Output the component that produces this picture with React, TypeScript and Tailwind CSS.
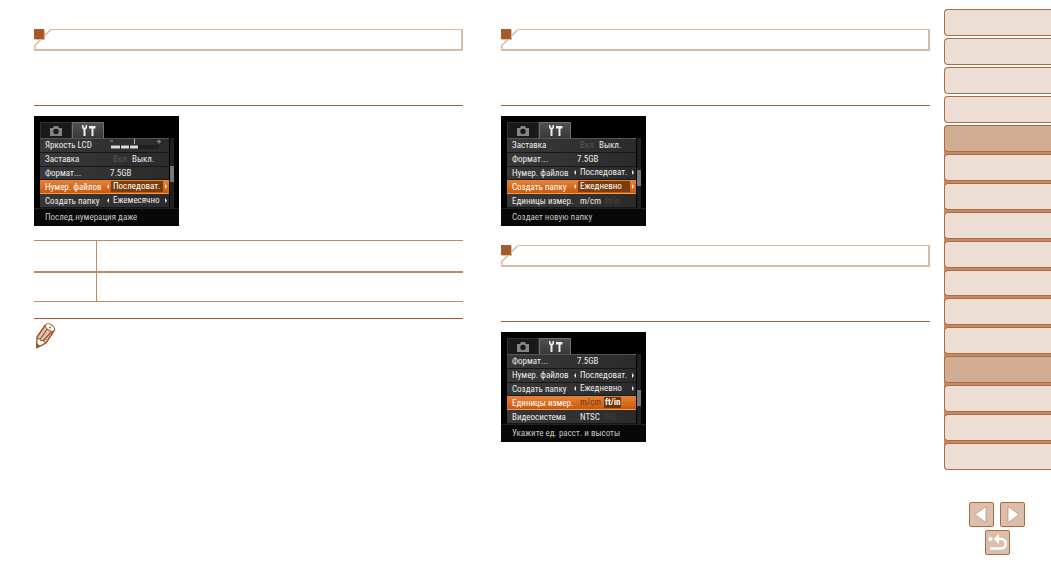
import React from "react";

type Row = { label: string; selected?: boolean; value: React.ReactNode };

function Heading() {
  return (
    <div className="flex h-[22px]">
      <svg width="17" height="22" viewBox="0 0 17 22" className="shrink-0" aria-hidden="true">
        <path d="M17 .5 .8 16.5V22" fill="none" stroke="#d9bba6" strokeWidth="1.6" />
        <path d="M0 21H17" stroke="#d9bba6" strokeWidth="2" />
        <rect x="1" y="1" width="10" height="10" fill="#d9bba6" />
        <rect width="10" height="10" fill="#a65a2a" />
      </svg>
      <div className="flex-1 border-t border-r-2 border-b-2 border-[#d9bba6]" />
    </div>
  );
}

function Arrow({ left, label }: { left?: boolean; label: string }) {
  return (
    <button type="button" aria-label={label} className="w-[2px] shrink-0">
      <svg width="2" height="5" viewBox="0 0 2 5">
        <path d={left ? "M2 0V5L0 2.5Z" : "M0 0V5L2 2.5Z"} fill="#f0f0f0" />
      </svg>
    </button>
  );
}

function Picker({ text, selected }: { text: string; selected?: boolean }) {
  return (
    <span className="-ml-[3px] flex items-center">
      <Arrow left label="Назад" />
      <span className="w-[2px]" />
      <span className={`w-[52px] pl-[2px] leading-[11px] ${selected ? "bg-[#7c3c08] text-white" : ""}`}>{text}</span>
      <span className="w-[2px]" />
      <Arrow label="Вперед" />
    </span>
  );
}

function Choice({ off, on }: { off: string; on: string }) {
  return (
    <span className="flex pl-[3px]">
      <span className="w-[19px] text-[#565656]">{off}</span>
      <span>{on}</span>
    </span>
  );
}

function Brightness() {
  return (
    <svg width="54" height="12" viewBox="0 0 54 12" role="img" aria-label="3 / 5">
      <path d="M0 2H3M47 2.5H51M49 .5V4.500" stroke="#999" />
      <path d="M24.500 0V5" stroke="#bbb" />
      <rect x="1" y="6" width="48" height="4" fill="#202020" />
      <path d="M1 8H10M11 8H19M20 8H28" stroke="#ddd" strokeWidth="3" />
    </svg>
  );
}

function Screen({ rows, hint, thumb }: { rows: Row[]; hint: string; thumb: string }) {
  return (
    <section className="flex h-[110px] w-[145px] flex-col overflow-hidden bg-black pt-[6px] pl-[6px] font-['Liberation_Sans_Narrow','Roboto_Condensed',Roboto,sans-serif] text-[9px] leading-3 text-[#ececec]">
      <div className="flex h-4">
        <button type="button" aria-label="Съемка" className="flex w-8 items-center justify-center rounded-t-[1px] border border-b-0 border-[#303030] bg-[#1a1a1a]">
          <svg width="12" height="10" viewBox="0 0 12 10">
            <path d="M0 2H3L4 0H8L9 2H12V10H0Z" fill="#858585" />
            <circle cx="6" cy="5.500" r="2.700" fill="#1a1a1a" />
          </svg>
        </button>
        <button type="button" aria-label="Настройка" className="flex w-8 items-center justify-center rounded-t-[1px] border border-b-0 border-[#707070] bg-linear-to-b from-[#505050] to-[#383838]">
          <svg width="15" height="11" viewBox="0 0 15 11">
            <path d="M1 0V3L2.500 4.500V11H4.500V4.500L6 3V0H4.500V2.500H2.500V0ZM8 1H14.500V3.500H12.500V11H10.500V3.500H8Z" fill="#eee" />
          </svg>
        </button>
      </div>
      <div className="flex h-[70px]">
        <ul className="grid w-[129px] grid-rows-5 border-t border-[#555]">
          {rows.map((r) => (
            <li
              key={r.label}
              className={`flex items-center border-b pl-[5px] whitespace-nowrap ${
                r.selected
                  ? "border-[#f29a50] bg-linear-to-b from-[#e88237] to-[#c85a0c] text-white"
                  : "border-[#171717] bg-linear-to-r from-[#383838] to-[#2b2b2b]"
              }`}
            >
              <span className="w-[65px] shrink-0">{r.label}</span>
              {r.value}
            </li>
          ))}
        </ul>
        <div className={`ml-px w-1 bg-[#202020] ${thumb}`}>
          <div className="h-4 bg-[#777]" />
        </div>
      </div>
      <p className="-ml-[6px] flex flex-1 items-center border-t border-[#222] bg-[#080808] pb-[2px] pl-[11px] whitespace-nowrap text-[#c4c4c4]">{hint}</p>
    </section>
  );
}

const folderRows: Row[] = [
  { label: "Заставка", value: <Choice off="Вкл." on="Выкл." /> },
  { label: "Формат...", value: "7.5GB" },
  { label: "Нумер. файлов", value: <Picker text="Последоват." /> },
  { label: "Создать папку", selected: true, value: <Picker text="Ежедневно" selected /> },
  {
    label: "Единицы измер.",
    value: (
      <span className="flex gap-1 pl-[3px]">
        m/cm<span className="text-[#484848]">ft/in</span>
      </span>
    ),
  },
];

const numberingRows: Row[] = [
  { label: "Яркость LCD", value: <Brightness /> },
  { label: "Заставка", value: <Choice off="Вкл." on="Выкл." /> },
  { label: "Формат...", value: "7.5GB" },
  { label: "Нумер. файлов", selected: true, value: <Picker text="Последоват." selected /> },
  { label: "Создать папку", value: <Picker text="Ежемесячно" /> },
];

const unitRows: Row[] = [
  { label: "Формат...", value: "7.5GB" },
  { label: "Нумер. файлов", value: <Picker text="Последоват." /> },
  { label: "Создать папку", value: <Picker text="Ежедневно" /> },
  {
    label: "Единицы измер.",
    selected: true,
    value: (
      <span className="flex gap-[3px] pl-[3px] leading-[11px] text-[#72350a]">
        m/cm<span className="bg-[#6c3408] px-px font-bold text-white">ft/in</span>
      </span>
    ),
  },
  {
    label: "Видеосистема",
    value: (
      <span className="flex gap-1 pl-[3px]">
        NTSC<span className="text-[#404040]">PAL</span>
      </span>
    ),
  },
];

function Tab({ n, active }: { n: number; active?: boolean }) {
  return (
    <a
      href={`#section-${n}`}
      aria-label={`Раздел ${n}`}
      className={`rounded-l-[4px] border border-r-0 border-[#b06c40] ${active ? "bg-[#d1ad93]" : "bg-[#ecddd5]"}`}
    />
  );
}

const navButton = "flex size-[25px] items-center justify-center rounded-[2px] border border-[#ac6a42] bg-[#dbbeac]";

export default function App() {
  return (
    <div className="flex min-h-screen bg-white">
      <main className="flex flex-1 gap-[38px] pt-[29px] pr-[14px] pl-[34px]">
        <article className="flex-1">
          <Heading />
          <hr className="mt-[54px] mb-[10px] border-[#a06032]" />
          <Screen rows={numberingRows} hint="Послед.нумерация даже" thumb="pt-7" />
          <table className="mt-[14px] w-full border-collapse border-y border-[#c08a66]">
            <tbody>
              <tr className="h-[31px] border-b-2 border-[#c08a66]">
                <td className="w-[62px] border-r border-[#c08a66]" />
                <td />
              </tr>
              <tr className="h-[30px]">
                <td className="border-r border-[#c08a66]" />
                <td />
              </tr>
            </tbody>
          </table>
          <hr className="mt-4 border-[#a65a2a]" />
          <svg width="22" height="26" viewBox="0 0 22 26" className="mt-[4px]" aria-hidden="true">
            <path d="M11 2.500 3 14V24.500L12 20 20.500 7Z" fill="#dec3b2" stroke="#a0501f" strokeWidth="1.400" />
            <path d="M3 15.500Q6 15 6.500 17.500 10 17 11.500 20L3 24.500Z" fill="#fff" stroke="#a0501f" />
            <path d="M14 5 6 16.500M18 8 9 18" stroke="#a0501f" strokeWidth="1.200" />
            <ellipse cx="16" cy="4.500" rx="5" ry="3" transform="rotate(32 16 4.500)" fill="#fff" stroke="#a85d30" />
            <path d="M2.500 20V25L6.500 23Z" fill="#a0501f" />
            <circle cx="16" cy="4.500" r="1" fill="#a85d30" />
          </svg>
        </article>
        <article className="flex-1">
          <Heading />
          <hr className="mt-[54px] mb-[10px] border-[#a06032]" />
          <Screen rows={folderRows} hint="Создает новую папку" thumb="pt-8" />
          <div className="mt-[19px]">
            <Heading />
          </div>
          <hr className="mt-[54px] mb-[10px] border-[#a06032]" />
          <Screen rows={unitRows} hint="Укажите ед. расст. и высоты" thumb="pt-9" />
        </article>
      </main>
      <aside className="w-[107px] shrink-0 pt-[9px]">
        <nav>
          <div className="grid h-[114px] auto-rows-fr gap-[2px]">
            {[1, 2, 3, 4].map((n) => (
              <Tab key={n} n={n} />
            ))}
          </div>
          <div className="mt-[2px] grid h-[345px] auto-rows-fr gap-[2px] rounded-l-[4px] bg-[#c18b67]">
            {[5, 6, 7, 8, 9, 10, 11, 12, 13, 14, 15, 16].map((n) => (
              <Tab key={n} n={n} active={n === 5 || n === 13} />
            ))}
          </div>
        </nav>
        <div className="mt-8 flex flex-wrap justify-center gap-x-[6px] gap-y-[3px] pr-[25px] pl-6">
          <button type="button" aria-label="Предыдущая" className={navButton}>
            <svg width="15" height="19" viewBox="0 0 15 19">
              <path d="M12 1.500V17.500L1 9.500Z" fill="#fff" stroke="#bd8968" strokeWidth=".7" />
            </svg>
          </button>
          <button type="button" aria-label="Следующая" className={navButton}>
            <svg width="15" height="19" viewBox="0 0 15 19">
              <path d="M3 1.500V17.500L14 9.500Z" fill="#fff" stroke="#bd8968" strokeWidth=".7" />
            </svg>
          </button>
          <button type="button" aria-label="Вернуться" className={navButton}>
            <svg width="20" height="18" viewBox="0 0 20 18">
              <circle cx="3.500" cy="5" r="2" fill="#fff" />
              <path d="M11 5H14A4.500 4.500 0 0 1 14 14.500H3" fill="none" stroke="#fff" strokeWidth="2.600" />
              <path d="M6.500 5 12 0V10Z" fill="#fff" />
            </svg>
          </button>
        </div>
      </aside>
    </div>
  );
}
